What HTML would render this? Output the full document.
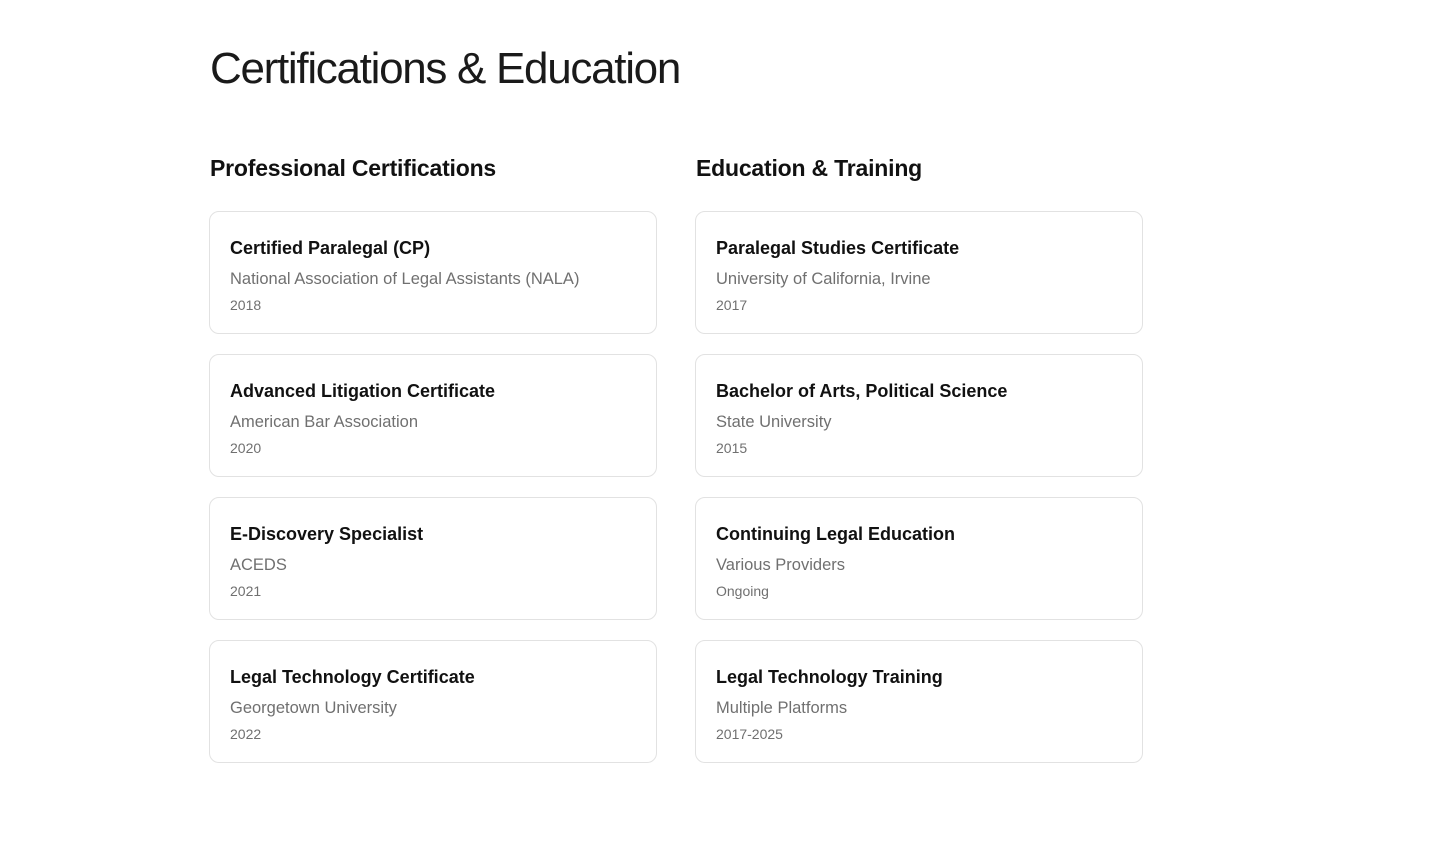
<!DOCTYPE html>
<html><head><style>
*{margin:0;padding:0;box-sizing:border-box}
body{width:1443px;height:846px;background:#fff;font-family:"Liberation Sans",sans-serif;color:#111;position:relative;overflow:hidden}
h1{position:absolute;left:210px;top:44px;font-size:44px;font-weight:300;letter-spacing:-1.3px;color:#1a1a1a;white-space:nowrap}
h2{position:absolute;top:155px;font-size:23px;font-weight:600;white-space:nowrap;letter-spacing:-0.2px}
.card{position:absolute;width:448px;height:123px;border:1px solid #e2e2e2;border-radius:10px;padding:0 20px}
.t{position:absolute;left:20px;top:26px;font-size:18px;font-weight:bold;color:#111;white-space:nowrap}
.s{position:absolute;left:20px;top:58px;font-size:16.5px;color:#707070;white-space:nowrap}
.y{position:absolute;left:20px;top:85px;font-size:14px;color:#707070}
</style></head><body>
<h1>Certifications &amp; Education</h1>
<h2 style="left:210px">Professional Certifications</h2>
<h2 style="left:696px">Education &amp; Training</h2>

<div class="card" style="left:209px;top:211px"><div class="t">Certified Paralegal (CP)</div><div class="s">National Association of Legal Assistants (NALA)</div><div class="y">2018</div></div>
<div class="card" style="left:209px;top:354px"><div class="t">Advanced Litigation Certificate</div><div class="s">American Bar Association</div><div class="y">2020</div></div>
<div class="card" style="left:209px;top:497px"><div class="t">E-Discovery Specialist</div><div class="s">ACEDS</div><div class="y">2021</div></div>
<div class="card" style="left:209px;top:640px"><div class="t">Legal Technology Certificate</div><div class="s">Georgetown University</div><div class="y">2022</div></div>

<div class="card" style="left:695px;top:211px"><div class="t">Paralegal Studies Certificate</div><div class="s">University of California, Irvine</div><div class="y">2017</div></div>
<div class="card" style="left:695px;top:354px"><div class="t">Bachelor of Arts, Political Science</div><div class="s">State University</div><div class="y">2015</div></div>
<div class="card" style="left:695px;top:497px"><div class="t">Continuing Legal Education</div><div class="s">Various Providers</div><div class="y">Ongoing</div></div>
<div class="card" style="left:695px;top:640px"><div class="t">Legal Technology Training</div><div class="s">Multiple Platforms</div><div class="y">2017-2025</div></div>
</body></html>
